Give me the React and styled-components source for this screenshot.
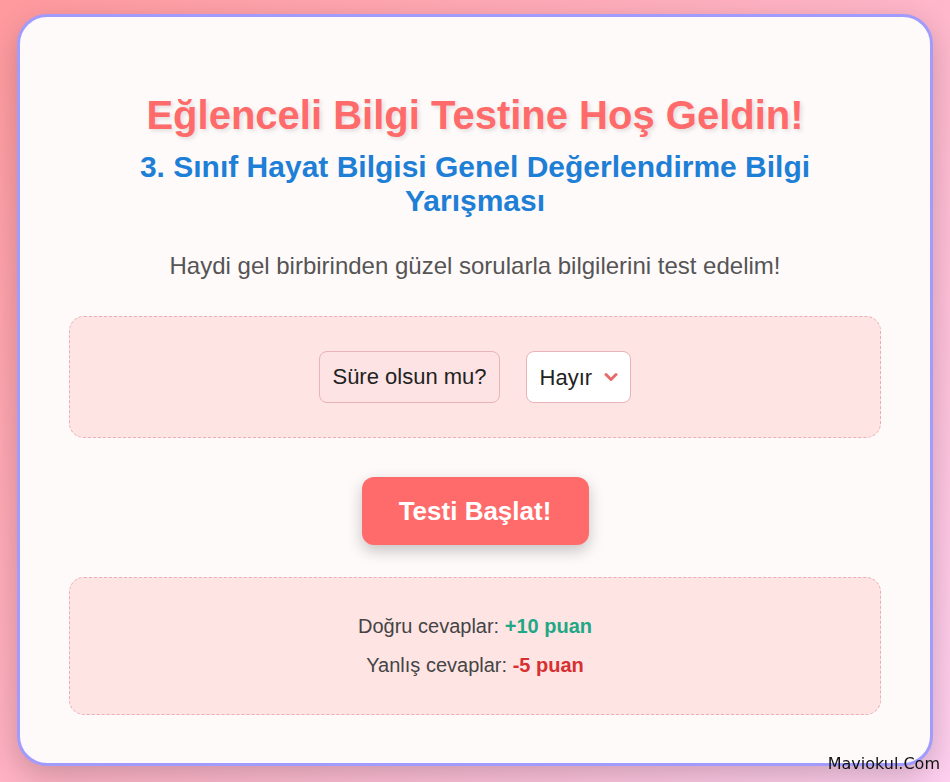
import React, { useState } from "react";
import styled, { createGlobalStyle } from "styled-components";

const GlobalStyle = createGlobalStyle`
  html, body {
    margin: 0;
    padding: 0;
  }
  body {
    min-height: 100vh;
    background: linear-gradient(135deg, #ff9a9e 0%, #fecfef 100%);
    font-family: "Liberation Sans", Arial, sans-serif;
  }
  * {
    box-sizing: border-box;
  }
`;

const Page = styled.div`
  padding: 14px 17px 16px;
`;

const Card = styled.div`
  background: #fffafa;
  border: 3px solid #a29bfe;
  border-radius: 30px;
  box-shadow: 0 10px 30px rgba(0, 0, 0, 0.2);
  padding: 75px 49px 48px;
  display: flex;
  flex-direction: column;
  align-items: center;
  text-align: center;
`;

const Title = styled.h1`
  margin: 0;
  font-size: 40px;
  line-height: 46px;
  font-weight: 700;
  color: #ff6b6b;
  text-shadow: 2px 2px 4px rgba(0, 0, 0, 0.12);
`;

const Subtitle = styled.h2`
  margin: 12px 0 0;
  font-size: 30px;
  line-height: 34px;
  font-weight: 700;
  color: #1e7fd6;
`;

const Lead = styled.p`
  margin: 34px 0 0;
  font-size: 24px;
  line-height: 28px;
  color: #555;
`;

const Panel = styled.div`
  width: 100%;
  margin-top: ${(p) => p.$top}px;
  background: #ffe4e4;
  border: 1px dashed #e8b0b4;
  border-radius: 15px;
  padding: ${(p) => p.$pad};
  display: flex;
  flex-direction: ${(p) => (p.$column ? "column" : "row")};
  align-items: center;
  justify-content: center;
  gap: ${(p) => p.$gap}px;
`;

const Label = styled.div`
  height: 52px;
  display: flex;
  align-items: center;
  padding: 0 12px;
  font-size: 22px;
  color: #222;
  background: #fde3e3;
  border: 1px solid #e8b4b8;
  border-radius: 8px;
`;

const SelectWrap = styled.div`
  position: relative;
  height: 52px;
`;

const Select = styled.select`
  appearance: none;
  -webkit-appearance: none;
  height: 52px;
  padding: 0 37px 0 13px;
  font-family: "Liberation Sans", Arial, sans-serif;
  font-size: 22px;
  color: #222;
  background: #fff;
  border: 1px solid #e8b4b8;
  border-radius: 8px;
  outline: none;
  cursor: pointer;
`;

const Chevron = styled.svg`
  position: absolute;
  right: 13px;
  top: 50%;
  transform: translateY(-50%);
  pointer-events: none;
`;

const StartButton = styled.button`
  margin-top: 39px;
  width: 227px;
  height: 68px;
  border: none;
  border-radius: 12px;
  background: #ff6b6b;
  color: #fff;
  font-family: "Liberation Sans", Arial, sans-serif;
  font-size: 26px;
  font-weight: 700;
  box-shadow: 0 6px 15px rgba(0, 0, 0, 0.22);
  cursor: pointer;
`;

const ScoreLine = styled.p`
  margin: 0;
  font-size: 20px;
  line-height: 23px;
  color: #444;
`;

const Points = styled.strong`
  color: ${(p) => (p.$good ? "#1fa886" : "#d63031")};
`;

const Watermark = styled.div`
  position: fixed;
  right: 10px;
  bottom: 9px;
  font-family: "DejaVu Sans", sans-serif;
  font-size: 16px;
  color: #111;
`;

export default function App() {
  const [timed, setTimed] = useState("hayir");

  return (
    <>
      <GlobalStyle />
      <Page>
        <Card>
          <Title>Eğlenceli Bilgi Testine Hoş Geldin!</Title>
          <Subtitle>
            3. Sınıf Hayat Bilgisi Genel Değerlendirme Bilgi Yarışması
          </Subtitle>
          <Lead>Haydi gel birbirinden güzel sorularla bilgilerini test edelim!</Lead>

          <Panel $top={36} $pad="34px 20px" $gap={26}>
            <Label>Süre olsun mu?</Label>
            <SelectWrap>
              <Select value={timed} onChange={(e) => setTimed(e.target.value)}>
                <option value="hayir">Hayır</option>
                <option value="evet">Evet</option>
              </Select>
              <Chevron width="14" height="10" viewBox="0 0 14 10">
                <path
                  d="M2 2.5 L7 7.5 L12 2.5"
                  fill="none"
                  stroke="#e86b6b"
                  strokeWidth="3"
                  strokeLinecap="round"
                  strokeLinejoin="round"
                />
              </Chevron>
            </SelectWrap>
          </Panel>

          <StartButton>Testi Başlat!</StartButton>

          <Panel $top={32} $pad="37px 20px" $gap={16} $column>
            <ScoreLine>
              Doğru cevaplar: <Points $good>+10 puan</Points>
            </ScoreLine>
            <ScoreLine>
              Yanlış cevaplar: <Points>-5 puan</Points>
            </ScoreLine>
          </Panel>
        </Card>
      </Page>
      <Watermark>Maviokul.Com</Watermark>
    </>
  );
}
